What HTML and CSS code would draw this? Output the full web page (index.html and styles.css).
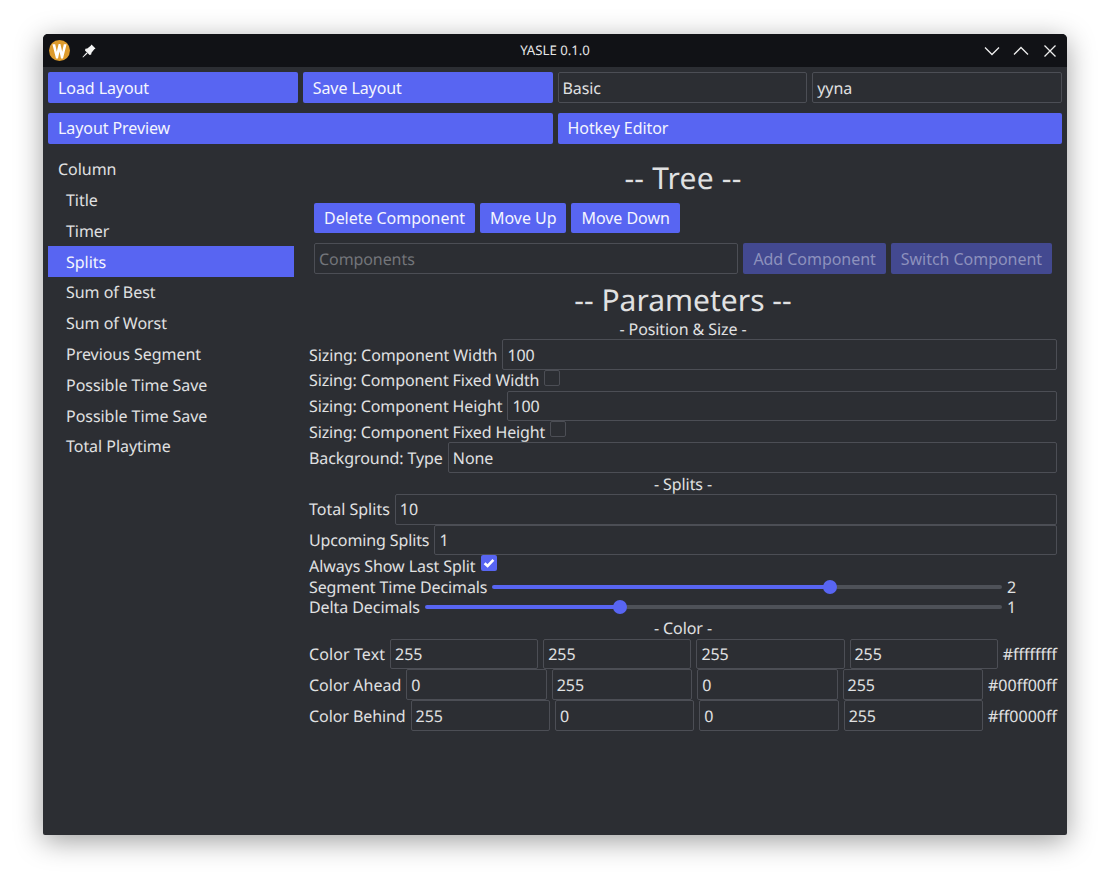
FILE: index.html
```html
<!DOCTYPE html>
<html lang="en">
<head>
<meta charset="utf-8">
<title>YASLE 0.1.0</title>
<link rel="stylesheet" href="styles.css">
</head>
<body>
<div class="window">
  <header class="titlebar">
    <div class="tb-left">
      <svg class="logo" width="21" height="21" viewBox="0 0 21 21"><circle cx="10.5" cy="10.5" r="10.5" fill="#dd9b2d"/><path d="M3.4 4.2 L7 18.4 L9 18.4 L10.5 11.5 L12 18.4 L14 18.4 L17.6 4.2 L14.8 4.2 L13.2 11.8 L11.4 4 L9.6 4 L7.8 11.8 L6.2 4.2 Z" fill="#fff"/></svg>
      <svg class="pin" width="14" height="14" viewBox="0 0 14 14"><path d="M9.5.5 13.5 4.5 12.3 5.3 9.5 8.7 9.2 10.6 7.6 11 3 6.4 3.4 4.8 5.3 4.5 8.7 1.7Z" fill="#f4f4f4"/><path d="M4.5 8.5 5.5 9.5 1 13.5 .5 13Z" fill="#f4f4f4"/></svg>
    </div>
    <div class="tb-title">YASLE 0.1.0</div>
    <div class="tb-right">
      <svg width="16" height="16" viewBox="0 0 16 16"><path d="M1 4.5 8 11.5 15 4.5" class="wc"/></svg>
      <svg width="16" height="16" viewBox="0 0 16 16"><path d="M1 11.5 8 4.5 15 11.5" class="wc"/></svg>
      <svg width="16" height="16" viewBox="0 0 16 16"><path d="M2.5 2.5 13.5 13.5M13.5 2.5 2.5 13.5" class="wc"/></svg>
    </div>
  </header>
  <main class="content">
    <div class="quad">
      <button class="btn">Load Layout</button>
      <button class="btn">Save Layout</button>
      <div class="input">Basic</div>
      <div class="input">yyna</div>
    </div>
    <div class="duo">
      <button class="btn">Layout Preview</button>
      <button class="btn">Hotkey Editor</button>
    </div>
    <div class="split">
      <nav class="sidebar">
        <div class="item">Column</div>
        <div class="item child">Title</div>
        <div class="item child">Timer</div>
        <div class="item child selected">Splits</div>
        <div class="item child">Sum of Best</div>
        <div class="item child">Sum of Worst</div>
        <div class="item child">Previous Segment</div>
        <div class="item child">Possible Time Save</div>
        <div class="item child">Possible Time Save</div>
        <div class="item child">Total Playtime</div>
      </nav>
      <section class="main">
        <div class="tree">
          <h1 class="heading tree-heading">-- Tree --</h1>
          <div class="row tree-buttons">
            <button class="btn">Delete Component</button>
            <button class="btn">Move Up</button>
            <button class="btn">Move Down</button>
          </div>
          <div class="row">
            <div class="input grow placeholder">Components</div>
            <button class="btn disabled">Add Component</button>
            <button class="btn disabled">Switch Component</button>
          </div>
        </div>
        <div class="params">
          <h1 class="heading param-heading">-- Parameters --</h1>
          <div class="label">- Position &amp; Size -</div>
          <div class="row"><span>Sizing: Component Width</span><div class="input grow">100</div></div>
          <div class="check-row"><span class="tight">Sizing: Component Fixed Width</span><span class="check"></span></div>
          <div class="row"><span class="tight">Sizing: Component Height</span><div class="input grow">100</div></div>
          <div class="check-row"><span class="tight">Sizing: Component Fixed Height</span><span class="check"></span></div>
          <div class="row"><span>Background: Type</span><div class="input grow">None</div></div>
          <div class="label">- Splits -</div>
          <div class="row"><span class="plain">Total Splits</span><div class="input grow">10</div></div>
          <div class="row"><span class="tight">Upcoming Splits</span><div class="input grow">1</div></div>
          <div class="check-row"><span>Always Show Last Split</span><span class="check on"><svg width="16" height="16" viewBox="0 0 16 16"><path d="M3.6 8.2 6.6 11 12.4 4.8" fill="none" stroke="#fff" stroke-width="2.6"/></svg></span></div>
          <div class="row flat"><span class="tight">Segment Time Decimals</span><div class="slider"><div class="fill two-thirds"></div><div class="handle"></div><div class="rest"></div></div><span class="value">2</span></div>
          <div class="row flat"><span>Delta Decimals</span><div class="slider"><div class="fill one-third"></div><div class="handle"></div><div class="rest"></div></div><span class="value">1</span></div>
          <div class="label">- Color -</div>
          <div class="row"><span class="wide">Color Text</span><div class="input grow">255</div><div class="input grow">255</div><div class="input grow">255</div><div class="input grow">255</div><span class="hex">#ffffffff</span></div>
          <div class="row"><span class="plain">Color Ahead</span><div class="input grow">0</div><div class="input grow">255</div><div class="input grow">0</div><div class="input grow">255</div><span class="hex">#00ff00ff</span></div>
          <div class="row"><span>Color Behind</span><div class="input grow">255</div><div class="input grow">0</div><div class="input grow">0</div><div class="input grow">255</div><span class="hex">#ff0000ff</span></div>
        </div>
      </section>
    </div>
  </main>
</div>
</body>
</html>
```
FILE: styles.css
```css
* { box-sizing: border-box; }
html, body { margin: 0; height: 100%; background: #fff; }
body {
  padding: 34px 41px 50px 43px;
  font-family: "Noto Sans", sans-serif;
  font-size: 16px;
  line-height: 20.8px;
  letter-spacing: -0.08px;
  color: #e0e1e2;
  text-rendering: geometricPrecision;
}
.window {
  width: 1024px;
  height: 801px;
  background: #2c2e33;
  border-radius: 5px 5px 2px 2px;
  box-shadow: 0 6px 28px rgba(0,0,0,.38);
  display: flex;
  flex-direction: column;
  overflow: hidden;
}
.titlebar {
  height: 33px;
  flex: none;
  background: #111216;
  display: flex;
  align-items: center;
  position: relative;
  padding: 0 9px 0 6px;
  justify-content: space-between;
}
.tb-left { display: flex; align-items: center; gap: 12px; }
.tb-right { display: flex; align-items: center; gap: 13px; }
.tb-title {
  position: absolute;
  left: 0; right: 0;
  text-align: center;
  font-size: 13.2px;
  letter-spacing: 0;
  color: #e6e6e6;
}
.wc { fill: none; stroke: #eeeeee; stroke-width: 1.3; }
.content {
  flex: 1;
  display: flex;
  flex-direction: column;
  gap: 10px;
  padding: 5px;
  min-height: 0;
}
.quad { display: grid; grid-template-columns: repeat(4, 1fr); gap: 5px; }
.duo { display: grid; grid-template-columns: repeat(2, 1fr); gap: 5px; }
.row { display: flex; align-items: center; gap: 5px; }
.row > span { margin-top: 1.2px; }
.row > .wide { letter-spacing: 0.1px; }
.row > .plain, .row > .hex { letter-spacing: 0; }
.tight { letter-spacing: -0.12px; }
.row.flat { height: 20.8px; }
.row.flat + .row.flat > span { margin-top: -.6px; }
.grow { flex: 1 1 0; min-width: 0; }
.btn {
  font: inherit;
  letter-spacing: inherit;
  border: 0;
  margin: 0;
  height: 30.8px;
  padding: 5.6px 10px 4.4px;
  background: #5865f2;
  color: #f4f5fe;
  border-radius: 2px;
  text-align: left;
  white-space: nowrap;
}
.btn.disabled { background: #434990; color: #8d91bd; letter-spacing: -0.04px; }
.input {
  height: 30.8px;
  padding: 4.6px 4px 3.4px;
  border: 1px solid #4c4e55;
  border-radius: 2px;
  white-space: nowrap;
}
.placeholder { color: #73757a; }
.split { display: flex; gap: 5px; flex: 1; min-height: 0; }
.sidebar { width: 246px; flex: none; letter-spacing: -0.04px; }
.item { height: 30.8px; padding: 5.6px 10px 4.4px; }
.item.child { padding-left: 18px; }
.item.selected { background: #5865f2; color: #f4f5fe; }
.main { flex: 1; min-width: 0; }
.tree { padding: 5px 10px 5px 15px; display: flex; flex-direction: column; gap: 10px; }
.tree-buttons { margin-top: -5px; letter-spacing: -0.04px; }
.heading {
  margin: 0;
  font-size: 30px;
  font-weight: 400;
  line-height: 39px;
  letter-spacing: 0;
  text-align: center;
  height: 39px;
}
.tree-heading { letter-spacing: 0.2px; margin: -1px 0 1px; }
.param-heading { padding-top: .5px; }
.params { padding: 0 5px 0 10px; }
.label { text-align: center; height: 20.8px; padding-top: .6px; }
.check-row { display: flex; gap: 5px; height: 20.8px; }
.check-row > span:first-child { padding-top: .6px; }
.check {
  width: 16px; height: 16px;
  border: 1px solid #4c4e55;
  border-radius: 2px;
  flex: none;
}
.check.on { background: #5865f2; border: 0; }
.check svg { display: block; }
.slider { flex: 1; display: flex; align-items: center; height: 20.8px; min-width: 0; }
.fill { height: 4px; background: #5865f2; border-radius: 2px 0 0 2px; margin-right: -7px; }
.rest { height: 4px; background: #4e5158; border-radius: 0 2px 2px 0; margin-left: -7px; }
.fill.two-thirds { flex: 2 0 7px; }
.fill.one-third { flex: 1 0 7px; }
.fill.two-thirds ~ .rest { flex: 1 0 7px; }
.fill.one-third ~ .rest { flex: 2 0 7px; }
.handle {
  width: 14px; height: 14px;
  border-radius: 50%;
  background: #5865f2;
  flex: none;
  position: relative;
  z-index: 1;
}
.value { width: 50px; flex: none; }
```
